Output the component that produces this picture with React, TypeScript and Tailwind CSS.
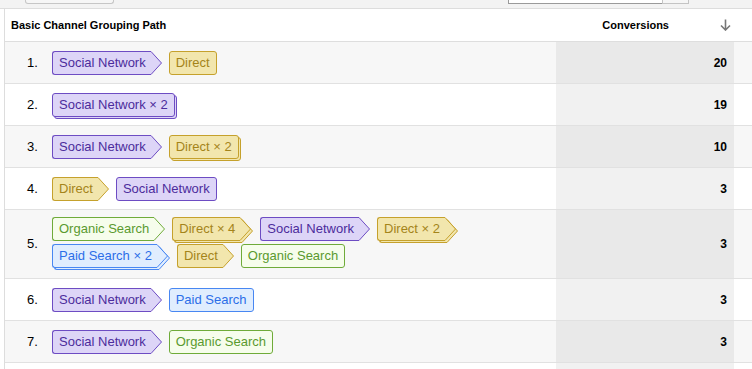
import React from "react";

type Channel = "sn" | "d" | "o" | "p";

const CHANNELS: Record<Channel, { label: string; body: string; fill: string; stroke: string }> = {
  sn: { label: "Social Network", body: "bg-[#ddd5f7] border-[#6d4cc3] text-[#4c2c9c]", fill: "#ddd5f7", stroke: "#6d4cc3" },
  d: { label: "Direct", body: "bg-[#f2e6ad] border-[#c5a12c] text-[#a4841a]", fill: "#f2e6ad", stroke: "#c5a12c" },
  o: { label: "Organic Search", body: "bg-[#f6fdec] border-[#6fab39] text-[#5a9a2f]", fill: "#f6fdec", stroke: "#6fab39" },
  p: { label: "Paid Search", body: "bg-[#e0edfe] border-[#4887f2] text-[#2c6ee8]", fill: "#e0edfe", stroke: "#4887f2" },
};

const rows: { n: number; path: [Channel, number][]; conv: number; tall?: boolean }[] = [
  { n: 1, path: [["sn", 1], ["d", 1]], conv: 20 },
  { n: 2, path: [["sn", 2]], conv: 19 },
  { n: 3, path: [["sn", 1], ["d", 2]], conv: 10 },
  { n: 4, path: [["d", 1], ["sn", 1]], conv: 3 },
  {
    n: 5,
    path: [["o", 1], ["d", 4], ["sn", 1], ["d", 2], ["p", 2], ["d", 1], ["o", 1]],
    conv: 3,
    tall: true,
  },
  { n: 6, path: [["sn", 1], ["p", 1]], conv: 3 },
  { n: 7, path: [["sn", 1], ["o", 1]], conv: 3 },
];

function Arrow({ fill, stroke }: { fill: string; stroke: string }) {
  return (
    <svg width="12" height="24" viewBox="0 0 12 24" className="block shrink-0 -ml-px">
      <path d="M0 0.5 H1 L11.5 12 L1 23.5 H0 Z" fill={fill} />
      <path d="M0 0.5 H1 L11.5 12 L1 23.5 H0" fill="none" stroke={stroke} strokeWidth="1" />
    </svg>
  );
}

function Chip({ ch, count, arrow }: { ch: Channel; count: number; arrow: boolean }) {
  const c = CHANNELS[ch];
  const stacked = count > 1;
  const shape = (text?: string) => (
    <>
      <span
        className={`flex h-[24px] items-center border-y border-l rounded-l-[3px] pl-[6px] ${
          arrow ? "pr-[5px]" : "border-r rounded-r-[3px] pr-[6px]"
        } ${c.body} ${text ? "" : "flex-1"}`}
      >
        {text}
      </span>
      {arrow && <Arrow fill={c.fill} stroke={c.stroke} />}
    </>
  );
  return (
    <div className={`relative flex ${stacked ? "mr-[2px]" : ""}`}>
      {stacked && <div className="absolute left-[2px] top-[2px] flex h-full w-full">{shape()}</div>}
      <div className="relative flex">{shape(stacked ? `${c.label} × ${count}` : c.label)}</div>
    </div>
  );
}

export default function App() {
  return (
    <div className="h-[369px] w-[752px] overflow-hidden bg-white font-['Liberation_Sans',Arial,sans-serif] text-black">
      {/* top toolbar strip (cut off) */}
      <div className="flex h-[9px] border-b border-[#dddddd] bg-[#f3f3f3]">
        <div className="ml-[25px] h-[4px] w-[89px] rounded-b-[3px] border-x border-b border-[#c6c6c6] bg-[#f6f6f6]" />
        <div className="ml-auto mr-[63px] flex h-[4px] w-[181px]">
          <div className="flex-1 border-l border-b border-[#9a9a9a] bg-white" />
          <div className="w-[27px] border-x border-b border-[#c4c4c4] bg-[#f6f6f6]" />
        </div>
      </div>

      <div className="pl-[4px]">
        <div className="border-l border-[#dddddd]">
          {/* header */}
          <div className="flex h-[33px] items-center border-b border-[#dedede] bg-white text-[11px] font-bold">
            <span className="pl-[6px]">Basic Channel Grouping Path</span>
            <span className="ml-auto">Conversions</span>
            <div className="flex w-[83px] justify-end pr-[21px]">
              <svg width="11" height="12" viewBox="0 0 11 12">
                <path d="M5.5 0.5 V10.5 M1 6.5 L5.5 11 L10 6.5" fill="none" stroke="#777777" strokeWidth="1.6" />
              </svg>
            </div>
          </div>

          {rows.map((r, i) => {
            const gray = i % 2 === 0;
            return (
              <div
                key={r.n}
                className={`flex border-b border-[#e1e1e1] ${gray ? "bg-[#f7f7f7]" : "bg-white"}`}
              >
                <div className="flex w-[47px] shrink-0 items-center pl-[22px] text-[13px]">{r.n}.</div>
                <div
                  className={`flex flex-1 flex-wrap content-center items-center gap-x-[7px] gap-y-[3px] text-[13px] ${
                    r.tall ? "pt-[7px] pb-[10px]" : "min-h-[41px]"
                  }`}
                >
                  {r.path.map(([ch, count], j) => (
                    <Chip key={j} ch={ch} count={count} arrow={j < r.path.length - 1} />
                  ))}
                </div>
                <div
                  className={`flex w-[178px] shrink-0 items-center justify-end pr-[7px] text-[12px] font-bold ${
                    gray ? "bg-[#e9e9e9]" : "bg-[#f1f1f1]"
                  }`}
                >
                  {r.conv}
                </div>
                <div className="w-[18px] shrink-0" />
              </div>
            );
          })}

          <div className="flex h-[41px] bg-white">
            <div className="flex-1" />
            <div className="w-[178px] bg-[#f1f1f1]" />
            <div className="w-[18px]" />
          </div>
        </div>
      </div>
    </div>
  );
}
